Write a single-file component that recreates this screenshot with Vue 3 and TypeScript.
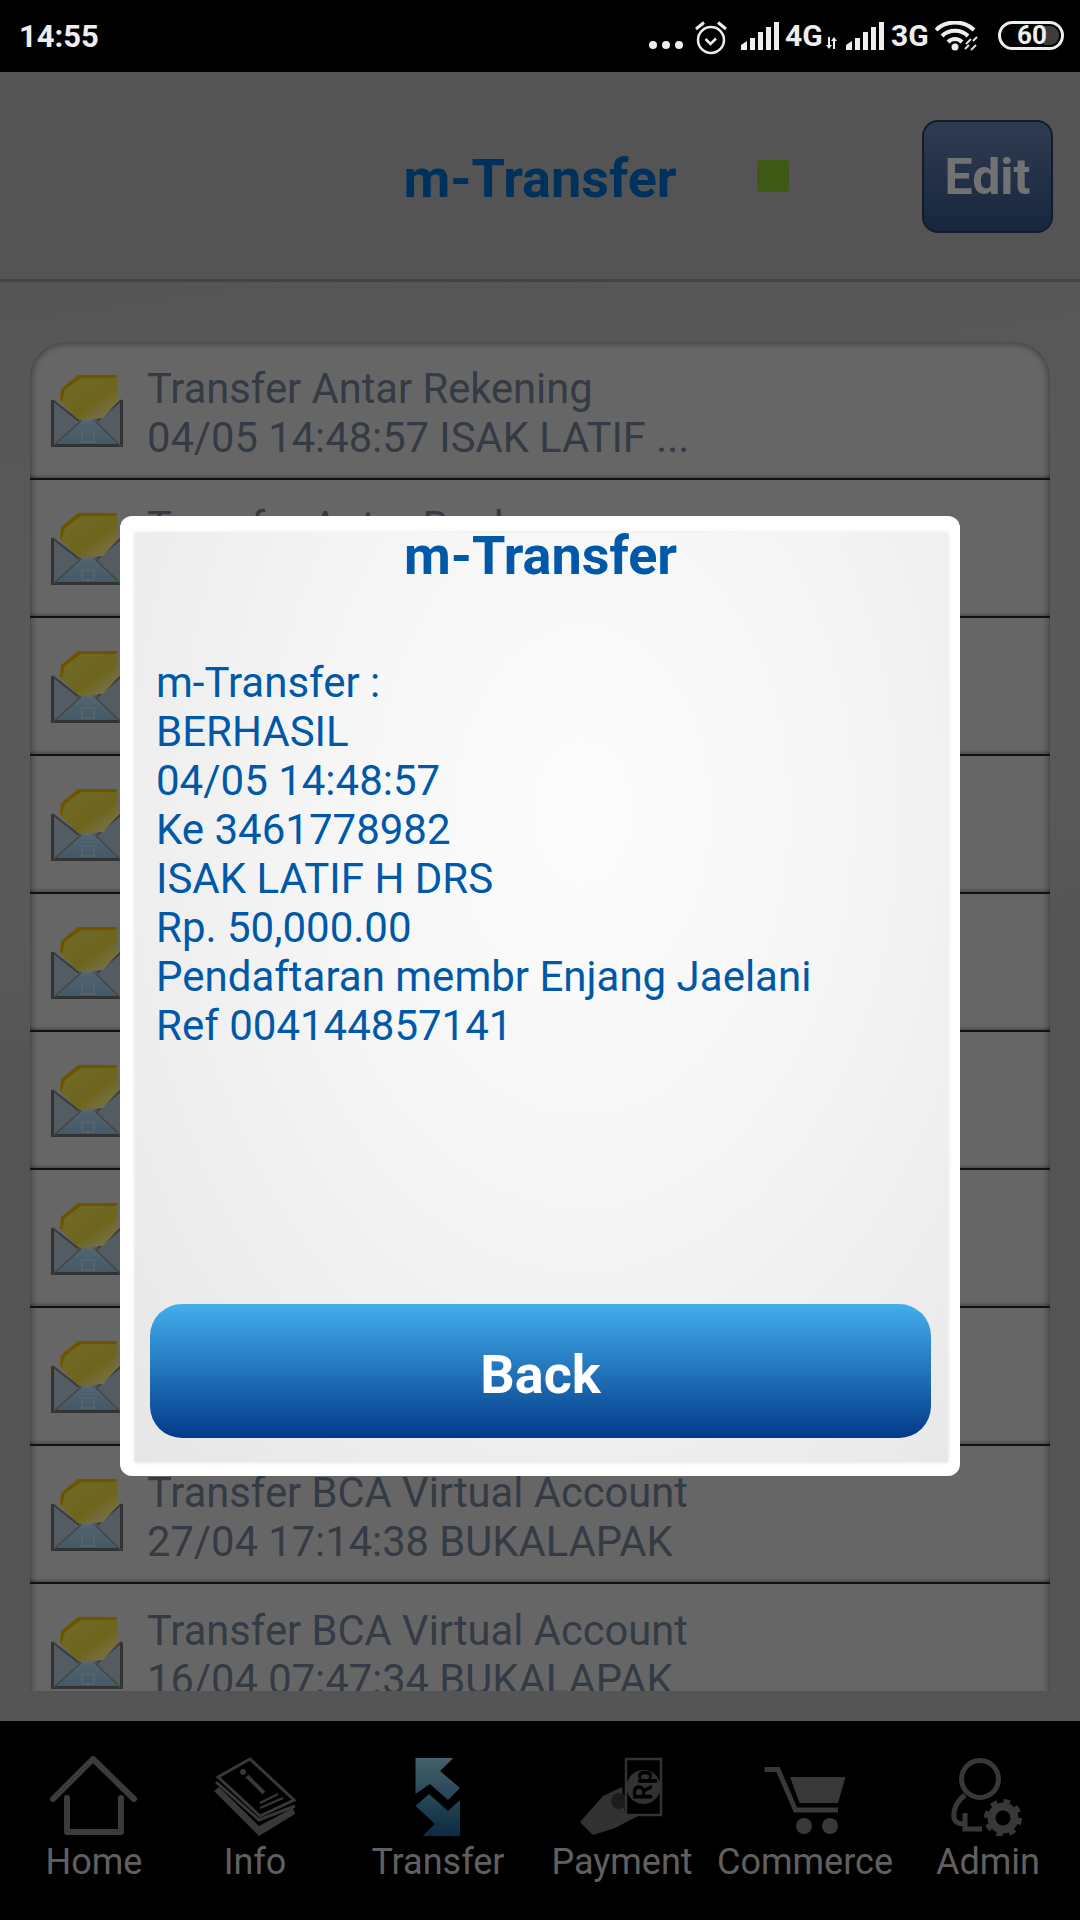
<template>
  <div class="screen">
    <svg class="defs" width="0" height="0" aria-hidden="true">
      <defs>
        <linearGradient id="letterFill" x1="0" y1="0" x2="1" y2="1">
          <stop offset="0" stop-color="#cfc552" />
          <stop offset="0.6" stop-color="#c8b834" />
          <stop offset="1" stop-color="#e2dcb4" />
        </linearGradient>
        <linearGradient id="flapFill" x1="0" y1="0" x2="0" y2="1">
          <stop offset="0" stop-color="#94b8cc" />
          <stop offset="1" stop-color="#7aa2ba" />
        </linearGradient>
        <linearGradient id="transferFill" gradientUnits="userSpaceOnUse" x1="0" y1="0" x2="0" y2="80">
          <stop offset="0" stop-color="#7fb4c6" />
          <stop offset="1" stop-color="#145078" />
        </linearGradient>
        <symbol id="envelope" viewBox="0 0 72 73">
          <path d="M1.5 26V71.5H70.5V26L36 50Z" fill="#98a8b2" />
          <path d="M3 71L31 47H45L69 71Z" fill="url(#flapFill)" />
          <path d="M1.5 26V71.5H70.5V26" fill="none" stroke="#5e5e5e" stroke-width="3" />
          <path d="M2 72L30 47M70 72L44 47" fill="none" stroke="#7c7c7c" stroke-width="1.5" />
          <path d="M1.5 26L28 47M70.5 26L46 47" fill="none" stroke="#6c6c6c" stroke-width="2" />
          <path d="M27 1H66V22L69 25L52 44L27 45L9 27L10 15Z" fill="url(#letterFill)" />
          <path d="M27 1H66V4H30L14 16L11 27L9 27L10 15Z" fill="#c69a00" />
          <path d="M31 58H43V68H31Z" fill="none" stroke="#a2b8c6" stroke-width="1.5" />
        </symbol>
      </defs>
    </svg>

    <div class="status-bar">
      <span class="clock">14:55</span>
      <div class="status-icons">
        <svg class="dots" width="34" height="12" viewBox="0 0 34 12">
          <circle cx="4" cy="6" r="4" /><circle cx="17" cy="6" r="4" /><circle cx="30" cy="6" r="4" />
        </svg>
        <svg class="alarm" width="32" height="34" viewBox="0 0 32 34">
          <circle cx="16" cy="19" r="13" fill="none" stroke="#eee" stroke-width="2.5" />
          <path d="M10.5 18L15.5 23L21 17.5" fill="none" stroke="#eee" stroke-width="2.5" />
          <path d="M1 8L9 1.5M31 8L23 1.5" fill="none" stroke="#eee" stroke-width="3" />
        </svg>
        <svg class="signal" width="38" height="28" viewBox="0 0 38 28">
          <path d="M0 28V23L6 19V28ZM9 28V16H14V28ZM17 28V10H22V28ZM25 28V5H30V28ZM33 28V0H38V28Z" />
        </svg>
        <span class="net">4G</span>
        <svg class="updown" width="13" height="12" viewBox="0 0 13 12">
          <path d="M3 0H5V8H7L4 12L1 8H3ZM8 12H10V4H12L9 0L6 4H8Z" />
        </svg>
        <svg class="signal second" width="38" height="28" viewBox="0 0 38 28">
          <path d="M0 28V23L6 19V28ZM9 28V16H14V28ZM17 28V10H22V28ZM25 28V5H30V28ZM33 28V0H38V28Z" />
        </svg>
        <span class="net three">3G</span>
        <svg class="wifi" width="45" height="30" viewBox="0 0 45 30">
          <path d="M1 9C11 -1 29 -1 39 9M7 15C14 8 26 8 33 15M13 21C17 17 23 17 27 21" fill="none" stroke="#eee" stroke-width="4" />
          <circle cx="20" cy="26" r="3.5" fill="#eee" />
          <path d="M30 28L34 24M38 20L42 16M31 23L36 18M36 29L41 24" fill="none" stroke="#ddd" stroke-width="2" />
        </svg>
        <div class="battery">
          <span class="battery-level">60</span>
          <span class="battery-empty"></span>
        </div>
      </div>
    </div>

    <div class="app">
      <header class="top-bar">
        <div></div>
        <h1 class="title">m-Transfer</h1>
        <div class="top-right">
          <span class="led"></span>
          <button class="edit-btn">Edit</button>
        </div>
      </header>

      <main class="content">
        <div class="list-clip">
          <ul class="inbox">
            <li v-for="(row, i) in rows" :key="i" class="inbox-row">
              <svg class="mail-icon" width="72" height="73"><use href="#envelope" /></svg>
              <div class="inbox-text">
                <div>{{ row.title }}</div>
                <div>{{ row.detail }}</div>
              </div>
            </li>
          </ul>
        </div>
      </main>

      <nav class="bottom-nav">
        <div class="nav-item">
          <svg class="nav-icon" width="100" height="80" viewBox="0 0 100 80">
            <path d="M9 43L49 3L90 43" fill="none" stroke="#6c6c6c" stroke-width="6" stroke-linecap="round" stroke-linejoin="round" />
            <path d="M23 42V76H77V42" fill="none" stroke="#6c6c6c" stroke-width="6" stroke-linecap="round" stroke-linejoin="round" />
          </svg>
          <span>Home</span>
        </div>
        <div class="nav-item">
          <svg class="nav-icon" width="100" height="80" viewBox="0 0 100 80">
            <path d="M45 3L89 44L55 60L13 21Z" fill="none" stroke="#666" stroke-width="3" />
            <path d="M11 26L54 64L90 50" fill="none" stroke="#666" stroke-width="3" />
            <path d="M9 35L54 80L90 58L88 52L54 70L14 31Z" fill="#666" />
            <circle cx="38" cy="16" r="3" fill="#666" />
            <path d="M42 20L59 37" stroke="#666" stroke-width="4" />
            <path d="M55 47L73 38M55 52L78 42" stroke="#666" stroke-width="2" />
          </svg>
          <span>Info</span>
        </div>
        <div class="nav-item">
          <svg class="nav-icon" width="100" height="80" viewBox="0 0 100 80">
            <path d="M27.5 2H65.5L52 15L72 32L60 44L42 28L27.5 38Z" fill="url(#transferFill)" />
            <path d="M72 44V80H34.5L47 68L27.5 50L41 38L60 55Z" fill="url(#transferFill)" />
          </svg>
          <span>Transfer</span>
        </div>
        <div class="nav-item">
          <svg class="nav-icon" width="100" height="80" viewBox="0 0 100 80">
            <path d="M8 66L31 40L50 31L53 58L66 60L43 72L21 79Z" fill="#5c5c5c" />
            <circle cx="47" cy="45" r="8" fill="#333" />
            <rect x="54" y="3" width="35" height="56" fill="none" stroke="#5c5c5c" stroke-width="2.5" />
            <circle cx="71.5" cy="31" r="17" fill="#5c5c5c" />
            <text class="rp" transform="translate(80 44) rotate(-90)">Rp</text>
          </svg>
          <span>Payment</span>
        </div>
        <div class="nav-item">
          <svg class="nav-icon" width="100" height="80" viewBox="0 0 100 80">
            <path d="M9.5 13.5H23L40.5 54H83" fill="none" stroke="#666" stroke-width="5" />
            <path d="M35 21H90.5L83 47H44.6Z" fill="#666" />
            <circle cx="49" cy="70" r="8" fill="#666" />
            <circle cx="75" cy="70" r="8" fill="#666" />
          </svg>
          <span>Commerce</span>
        </div>
        <div class="nav-item">
          <svg class="nav-icon" width="100" height="80" viewBox="0 0 100 80">
            <circle cx="42" cy="23" r="18.5" fill="none" stroke="#666" stroke-width="5" />
            <path d="M27 39C19 45 15 52 16 62C17 67 21 68 27 68M27 57V73H44" fill="none" stroke="#666" stroke-width="5" />
            <circle cx="65" cy="62" r="11.5" fill="none" stroke="#666" stroke-width="8" />
            <circle cx="65" cy="62" r="17" fill="none" stroke="#666" stroke-width="4" stroke-dasharray="6.7 6.65" />
          </svg>
          <span>Admin</span>
        </div>
      </nav>

      <div class="dim">
        <div class="dialog">
          <div class="dialog-panel">
            <h2 class="dialog-title">m-Transfer</h2>
            <div class="dialog-body">
              <div v-for="line in message" :key="line">{{ line }}</div>
            </div>
            <button class="back-btn">Back</button>
          </div>
        </div>
      </div>
    </div>
  </div>
</template>

<script setup lang="ts">
interface InboxRow {
  title: string
  detail: string
}

const rows: InboxRow[] = [
  { title: 'Transfer Antar Rekening', detail: '04/05 14:48:57 ISAK LATIF ...' },
  { title: 'Transfer Antar Bank', detail: '03/05 10:21:14 ISAK LATIF ...' },
  { title: 'Transfer Antar Rekening', detail: '02/05 09:12:40 ISAK LATIF ...' },
  { title: 'Transfer Antar Rekening', detail: '30/04 16:30:05 ISAK LATIF ...' },
  { title: 'Transfer Antar Rekening', detail: '29/04 11:05:22 ISAK LATIF ...' },
  { title: 'Transfer Antar Bank', detail: '28/04 15:44:09 ISAK LATIF ...' },
  { title: 'Transfer Antar Rekening', detail: '28/04 08:17:31 ISAK LATIF ...' },
  { title: 'Transfer BCA Virtual Account', detail: '27/04 19:02:51 BUKALAPAK' },
  { title: 'Transfer BCA Virtual Account', detail: '27/04 17:14:38 BUKALAPAK' },
  { title: 'Transfer BCA Virtual Account', detail: '16/04 07:47:34 BUKALAPAK' },
]

const message: string[] = [
  'm-Transfer :',
  'BERHASIL',
  '04/05 14:48:57',
  'Ke 3461778982',
  'ISAK LATIF H DRS',
  'Rp. 50,000.00',
  'Pendaftaran membr Enjang Jaelani',
  'Ref 004144857141',
]
</script>

<style>
html,
body {
  margin: 0;
  background: #000;
}
</style>

<style scoped>
.screen {
  width: 1080px;
  height: 1920px;
  display: flex;
  flex-direction: column;
  overflow: hidden;
  font-family: Roboto, 'Liberation Sans', sans-serif;
}
.defs {
  position: absolute;
}
.status-bar {
  height: 72px;
  flex: none;
  background: #000;
  color: #eee;
  display: flex;
  justify-content: space-between;
  align-items: center;
  padding: 0 16px 0 19px;
  box-sizing: border-box;
}
.clock {
  font-size: 31px;
  font-weight: 700;
}
.status-icons {
  display: flex;
  align-items: flex-start;
  height: 72px;
  fill: #eee;
}
.dots {
  margin: 39px 0 0 0;
}
.alarm {
  margin: 21px 0 0 12px;
}
.signal {
  margin: 22px 0 0 14px;
}
.signal.second {
  margin-left: 8px;
}
.net {
  font-size: 30px;
  font-weight: 700;
  line-height: 30px;
  margin: 21px 0 0 6px;
  width: 38px;
}
.net.three {
  margin-left: 7px;
}
.updown {
  margin: 37px 0 0 2px;
}
.wifi {
  margin: 21px 0 0 6px;
}
.battery {
  margin: 21px 0 0 18px;
  width: 66px;
  height: 29px;
  border: 3px solid #eee;
  border-radius: 15px;
  box-sizing: border-box;
  display: flex;
  align-items: center;
  position: relative;
}
.battery-level {
  font-size: 26px;
  font-weight: 700;
  line-height: 23px;
  margin-left: 16px;
  position: relative;
  z-index: 1;
}
.battery-empty {
  position: absolute;
  top: 2px;
  bottom: 2px;
  right: 2px;
  width: 15px;
  background: #3c3c3c;
  border-radius: 0 9px 9px 0;
}

.app {
  flex: 1;
  position: relative;
  display: flex;
  flex-direction: column;
  min-height: 0;
}
.top-bar {
  height: 210px;
  flex: none;
  box-sizing: border-box;
  display: grid;
  grid-template-columns: 1fr auto 1fr;
  align-items: center;
  background: #9a9a9a;
  border-bottom: 3px solid #7d7d7d;
}
.title {
  margin: 6px 0 0;
  font-size: 54px;
  font-weight: 700;
  color: #0058a8;
}
.top-right {
  display: flex;
  align-items: center;
  justify-content: space-between;
  padding: 0 27px 0 80px;
}
.led {
  width: 32px;
  height: 32px;
  border-radius: 4px;
  background: #71a324;
}
.edit-btn {
  width: 131px;
  height: 113px;
  margin-top: 2px;
  border-radius: 16px;
  border: 2px solid #22344f;
  background: linear-gradient(#566c92, #2c4774);
  color: #cfcfcf;
  font-family: inherit;
  font-size: 50px;
  font-weight: 700;
  padding: 0;
  box-sizing: border-box;
}

.content {
  flex: 1;
  min-height: 0;
  box-sizing: border-box;
  padding: 60px 30px 30px;
  background: linear-gradient(172deg, #9c9c9c 0, #a3a3a3 22%, #a2a2a2 42%, #999 52%, #9c9c9c 100%);
}
.list-clip {
  height: 100%;
  overflow: hidden;
}
.inbox {
  list-style: none;
  margin: 0;
  padding: 0;
  background: #bbb;
  border-radius: 36px 36px 0 0;
  box-shadow: inset 0 0 7px 1px rgba(0, 0, 0, 0.45);
}
.inbox-row {
  height: 138px;
  box-sizing: border-box;
  border-bottom: 2px solid #1f1f1f;
  display: flex;
  align-items: flex-start;
  padding: 32px 0 0 21px;
  box-shadow: inset 0 -4px 3px -2px rgba(0, 0, 0, 0.25);
  font-size: 41.7px;
  line-height: 49px;
  color: #606c7e;
}
.mail-icon {
  flex: none;
}
.inbox-text {
  margin: -10px 0 0 24px;
}

.bottom-nav {
  height: 199px;
  flex: none;
  background: #000;
  display: grid;
  grid-template-columns: 176px 146px 220px 148px 218px 148px;
  padding-left: 6px;
  box-sizing: border-box;
}
.nav-item {
  display: flex;
  flex-direction: column;
  align-items: center;
  padding-top: 35px;
  color: #b0b0b0;
  font-size: 36px;
  line-height: 40px;
}
.nav-icon {
  margin-bottom: 6px;
}
.rp {
  font-size: 25px;
  font-weight: 700;
  fill: #000;
}

.dim {
  position: absolute;
  inset: 0;
  background: rgba(0, 0, 0, 0.45);
  display: flex;
  align-items: center;
  justify-content: center;
}
.dialog {
  width: 840px;
  height: 960px;
  box-sizing: border-box;
  background: #fff;
  border-radius: 12px;
  padding: 17px 12px 14px 15px;
  display: flex;
}
.dialog-panel {
  flex: 1;
  display: flex;
  flex-direction: column;
  background: radial-gradient(ellipse at 55% 30%, #fcfcfc 0, #f6f6f6 40%, #e6e6e6 100%);
  box-shadow: 0 0 4px #ddd;
  color: #0058a8;
  padding: 0 17px 24px 15px;
}
.dialog-title {
  margin: 0;
  font-size: 54px;
  font-weight: 700;
  text-align: center;
  line-height: 46px;
}
.dialog-body {
  flex: 1;
  margin: 79px 0 0 6px;
  font-size: 42px;
  line-height: 49px;
}
.back-btn {
  height: 134px;
  flex: none;
  border: none;
  border-radius: 32px;
  background: linear-gradient(#43aeec, #023a8a);
  color: #fff;
  font-family: inherit;
  font-size: 54px;
  font-weight: 700;
  padding: 6px 0 0;
}
</style>
